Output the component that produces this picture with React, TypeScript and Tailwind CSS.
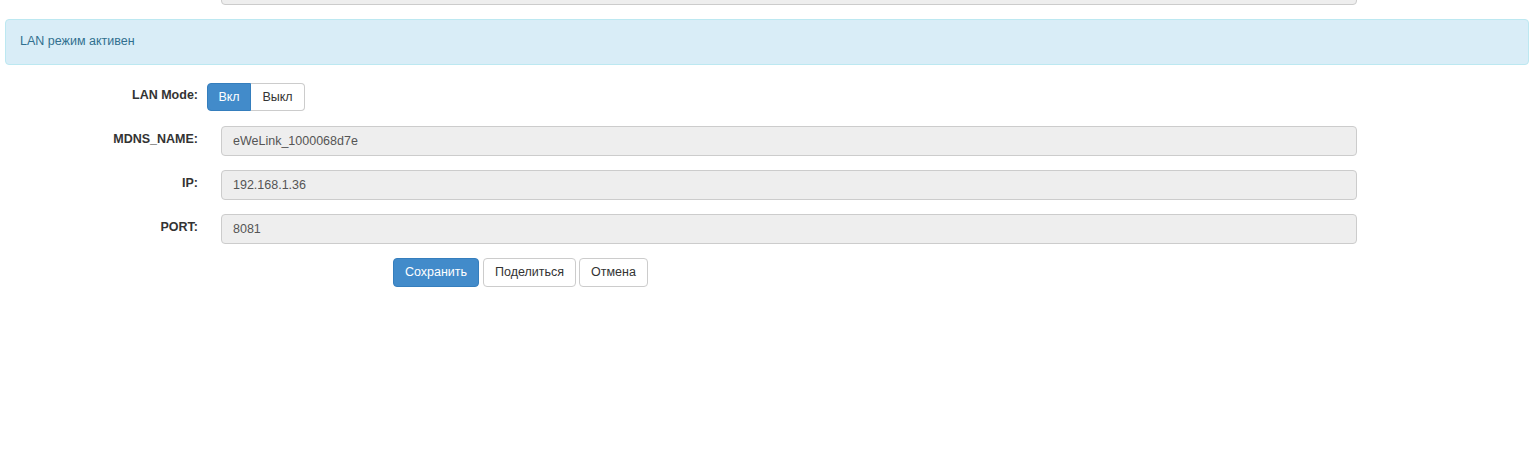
import { useState } from 'react';

const FIELDS = [
  { label: 'MDNS_NAME:', value: 'eWeLink_1000068d7e' },
  { label: 'IP:', value: '192.168.1.36' },
  { label: 'PORT:', value: '8081' },
];

export default function App() {
  const [lanOn, setLanOn] = useState(true);

  return (
    <div className="min-h-[450px] bg-white text-[12.5px] text-[#333] font-['Liberation_Sans',Arial,sans-serif]">
      {/* обрезанное поле сверху */}
      <div className="h-[5px] overflow-hidden">
        <div className="ml-[221px] w-[1136px] h-[30px] -mt-[25px] rounded border border-[#ccc] bg-[#eee]" />
      </div>

      {/* сообщение */}
      <div className="mt-[14px] ml-[5px] mr-[8px] h-[46px] flex items-center px-[14px] pb-[2px] rounded border border-[#bce8f1] bg-[#d9edf7] text-[#31708f]">
        LAN режим активен
      </div>

      {/* форма */}
      <div className="mt-[18px] flex">
        <div className="w-[198px] pt-[4px] text-right font-bold leading-[17px]">LAN Mode:</div>
        <div className="ml-[9px] flex h-[28px]">
          <button
            onClick={() => setLanOn(true)}
            className={`w-[44px] rounded-l border ${lanOn ? 'bg-[#428bca] border-[#357ebd] text-white' : 'bg-white border-[#ccc] text-[#333]'}`}
          >
            Вкл
          </button>
          <button
            onClick={() => setLanOn(false)}
            className={`w-[54px] rounded-r border border-l-0 ${!lanOn ? 'bg-[#428bca] border-[#357ebd] text-white' : 'bg-white border-[#ccc] text-[#333]'}`}
          >
            Выкл
          </button>
        </div>
      </div>

      <div className="mt-[15px] flex flex-col gap-[14px]">
        {FIELDS.map((f) => (
          <div key={f.label} className="flex">
            <div className="w-[198px] pt-[5px] text-right font-bold leading-[17px]">{f.label}</div>
            <input
              readOnly
              value={f.value}
              className="ml-[23px] w-[1136px] h-[30px] px-[11px] rounded border border-[#ccc] bg-[#eee] text-[#555] outline-none"
            />
          </div>
        ))}
      </div>

      <div className="mt-[14px] ml-[393px] flex">
        <button className="h-[29px] w-[86px] rounded border border-[#357ebd] bg-[#428bca] text-white">
          Сохранить
        </button>
        <button className="ml-[4px] h-[29px] w-[93px] rounded border border-[#ccc] bg-white text-[#333]">
          Поделиться
        </button>
        <button className="ml-[3px] h-[29px] w-[69px] rounded border border-[#ccc] bg-white text-[#333]">
          Отмена
        </button>
      </div>
    </div>
  );
}
